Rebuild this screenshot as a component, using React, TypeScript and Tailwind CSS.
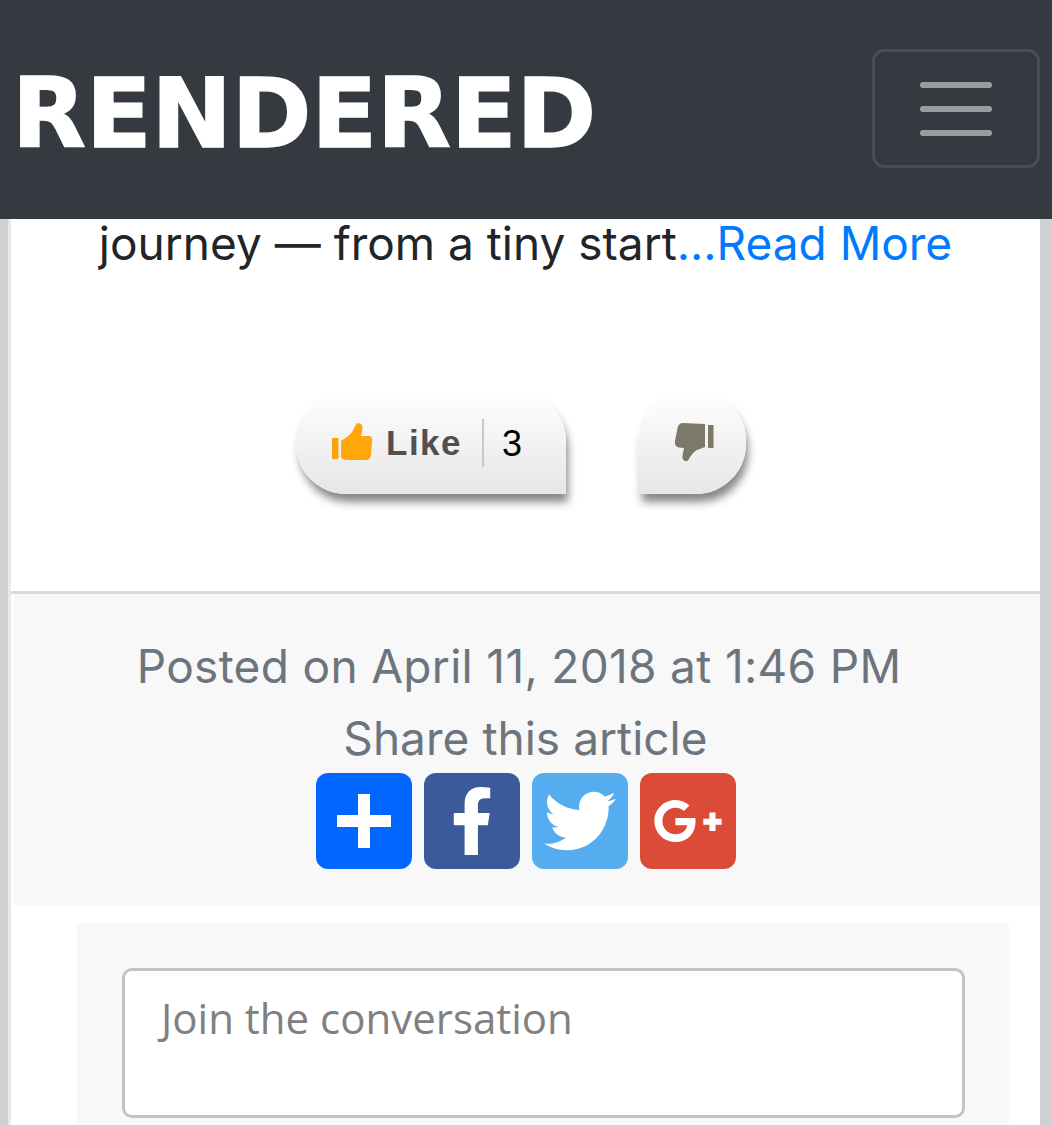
import React from "react";
import { FaFacebookF, FaTwitter, FaGooglePlusG } from "react-icons/fa";

function ThumbUp() {
  return (
    <svg viewBox="0 0 42 42" className="w-[42px] h-[42px]">
      <rect x="1" y="16" width="6.5" height="21" fill="#fba30f" />
      <path
        fill="#ffa60a"
        d="M10 19 C14 16 18 14 21 10 C23 7 24 4 25.5 1.5 C28 0.5 31.5 1.5 31.5 5 C31.5 8 31 11 30 14 L38 14 C41 14 41.5 17 41 20 L40 33 C39.5 36.5 38 38 35 38 L17 38 C13 38 11 37 10 35 Z"
      />
    </svg>
  );
}

function ThumbDown() {
  return (
    <svg viewBox="0 0 42 42" className="w-[42px] h-[42px]">
      <rect x="34" y="3" width="5.5" height="23" fill="#7c786a" />
      <path
        fill="#7c786a"
        d="M31 2 L9 1 C6 1 4 3 3.5 6 L1 19 C0.5 23 2 25 5 25.5 L10 26 C9.5 30 8 33 8.5 36 C9 39 12 40 14 38.5 C16 35 19 30 23 28 L31 25 Z"
      />
    </svg>
  );
}

const btn =
  "flex items-center bg-gradient-to-b from-white to-[#e6e6e6] shadow-[3px_9px_8px_-1px_rgba(70,70,70,0.65)]";
const tile = "w-[96px] h-[96px] rounded-[12px] flex items-center justify-center text-white";

export default function App() {
  return (
    <div className="w-[1052px] h-[1125px] overflow-hidden bg-white flex flex-col font-['Liberation_Sans',sans-serif]">
      <header className="h-[219px] shrink-0 bg-[#343a40] flex items-start justify-between pl-[12px] pr-[12px] pt-[49px]">
        <div className="text-white font-bold text-[96px] leading-[119px] mt-[6px] font-['DejaVu_Sans',sans-serif] [-webkit-text-stroke:1.5px_white]">
          RENDERED
        </div>
        <button className="w-[168px] h-[119px] rounded-[12px] border-[3px] border-white/10 flex flex-col items-center justify-center gap-[18px]">
          <span className="block w-[72px] h-[6px] rounded-full bg-[#9a9b9d]" />
          <span className="block w-[72px] h-[6px] rounded-full bg-[#9a9b9d]" />
          <span className="block w-[72px] h-[6px] rounded-full bg-[#9a9b9d]" />
        </button>
      </header>

      <main className="flex-1 flex bg-white border-l-[8px] border-r-[12px] border-[#d0d0d0] min-h-0">
        <div className="flex-1 flex flex-col border-l-[3px] border-[#e9e9e9] min-w-0">
          <p className="text-center text-[46px] leading-[50px] text-[#212529] font-['Inter',sans-serif] h-[172px] -mt-[1px]">
            journey — from a tiny start<span className="text-[#007bff]">...Read More</span>
          </p>

          <div className="flex justify-center gap-[72px] pr-[9px] h-[201px] pt-[1px]">
            <div className={btn + " w-[270px] h-[103px] rounded-[50px_50px_0_50px] pl-[35px]"}>
              <ThumbUp />
              <span className="ml-[13px] text-[#505050] font-bold text-[35px] tracking-[1.5px] mt-[2px]">Like</span>
              <span className="ml-[20px] w-[2px] h-[48px] bg-[#c8c8c8]" />
              <span className="ml-[18px] text-[36px] text-black mt-[2px]">3</span>
            </div>
            <div className={btn + " w-[108px] h-[103px] rounded-[50px_50px_50px_0] justify-center pl-[6px]"}>
              <ThumbDown />
            </div>
          </div>

          <div className="h-[3px] shrink-0 bg-[#dadada]" />
          <footer className="h-[311px] shrink-0 bg-[#f8f8f9] ml-[3px] flex flex-col items-center text-[#6c757d] font-['Inter',sans-serif] text-[46px] leading-[72px] pt-[36px]">
            <div className="tracking-[0.33px] pr-[16px]">Posted on April 11, 2018 at 1:46 PM</div>
            <div className="tracking-[0.03px] pr-[3px]">Share this article</div>
            <div className="flex gap-[12px] mt-[-1px] pr-[3px]">
              <div className={tile + " bg-[#0166ff]"}>
                <svg viewBox="0 0 54 54" className="w-[54px] h-[54px]" fill="#fff">
                  <rect x="21" y="0" width="12" height="54" />
                  <rect x="0" y="21" width="54" height="12" />
                </svg>
              </div>
              <div className={tile + " bg-[#3b5a9a]"}>
                <FaFacebookF size={68} />
              </div>
              <div className={tile + " bg-[#55acee]"}>
                <FaTwitter size={72} />
              </div>
              <div className={tile + " bg-[#dc4a38]"}>
                <FaGooglePlusG size={70} />
              </div>
            </div>
          </footer>

          <section className="flex-1 mt-[18px] ml-[66px] mr-[31px] bg-[#f8f8f9] pl-[45px] pr-[44px] pt-[45px]">
            <div className="h-[150px] rounded-[10px] border-[3px] border-[#bcc4cc] bg-white pl-[36px] pt-[19px] text-[42px] leading-[56px] text-[#808080] font-['Open_Sans',sans-serif]">
              Join the conversation
            </div>
          </section>
        </div>
      </main>
    </div>
  );
}
